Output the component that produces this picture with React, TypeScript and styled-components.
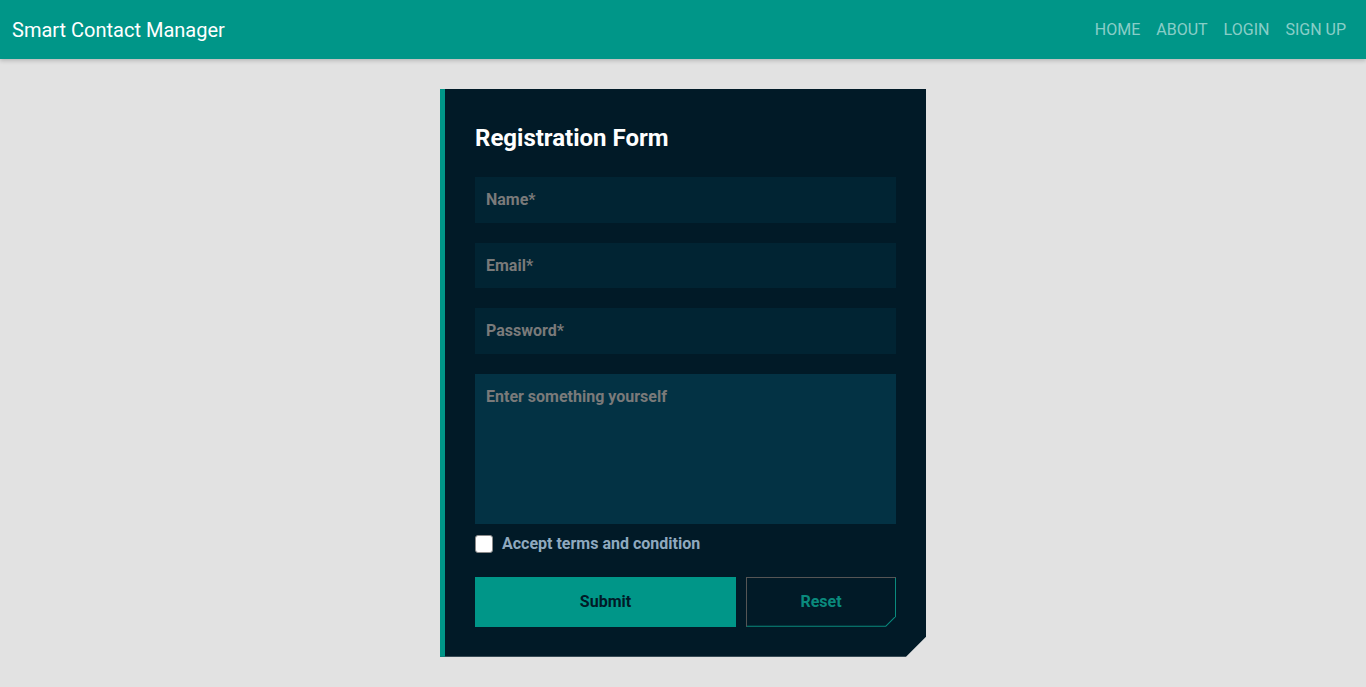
import React from "react";
import styled, { createGlobalStyle } from "styled-components";

const Global = createGlobalStyle`
  * { box-sizing: border-box; }
  html, body { margin: 0; padding: 0; }
  body {
    background: #e2e2e2;
    font-family: Roboto, "Liberation Sans", Arial, sans-serif;
    min-height: 687px;
  }
`;

const Navbar = styled.nav`
  height: 59px;
  background: #009688;
  display: flex;
  align-items: center;
  justify-content: space-between;
  padding: 0 12px;
  box-shadow: 0 2px 4px rgba(0, 0, 0, 0.18);
  position: relative;
  z-index: 1;
`;

const Brand = styled.a`
  color: #fff;
  font-size: 20px;
  line-height: 30px;
  text-decoration: none;
  margin-top: 1px;
`;

const NavList = styled.ul`
  display: flex;
  list-style: none;
  margin: 0;
  padding: 0;
`;

const NavLink = styled.a`
  display: block;
  padding: 8px 8px;
  font-size: 16px;
  line-height: 24px;
  color: rgba(255, 255, 255, 0.55);
  text-decoration: none;
  text-transform: uppercase;
`;

const Main = styled.main`
  display: flex;
  justify-content: center;
  padding-top: 30px;
`;

const Card = styled.form`
  width: 486px;
  background: #011a27;
  border-left: 5px solid #009688;
  padding: 30px 30px 30px 30px;
  clip-path: polygon(0 0, 100% 0, 100% calc(100% - 20px), calc(100% - 20px) 100%, 0 100%);
  display: flex;
  flex-direction: column;
`;

const Title = styled.h2`
  margin: 4px 0 24px;
  color: #fff;
  font-size: 24px;
  font-weight: 700;
  line-height: 30px;
`;

const Fields = styled.div`
  display: flex;
  flex-direction: column;
  gap: 20px;
`;

const Input = styled.input`
  height: 45.6px;
  width: 100%;
  border: none;
  outline: none;
  background: #012433;
  color: #ddd;
  padding: 0 11px;
  font-family: Roboto, "Liberation Sans", Arial, sans-serif;
  font-size: 16px;
  font-weight: 700;
  &::placeholder { color: #7a7a7a; opacity: 1; }
`;

const TextArea = styled.textarea`
  height: 150px;
  width: 100%;
  border: none;
  outline: none;
  resize: none;
  background: #033244;
  color: #ddd;
  padding: 13px 11px;
  font-family: Roboto, "Liberation Sans", Arial, sans-serif;
  font-size: 16px;
  font-weight: 700;
  line-height: 20px;
  display: block;
  &::placeholder { color: #7a7a7a; opacity: 1; }
`;

const CheckRow = styled.label`
  display: flex;
  align-items: center;
  gap: 9px;
  margin-top: 11px;
  color: #8fa9bf;
  font-size: 16px;
  font-weight: 700;
  line-height: 18px;
`;

const Box = styled.span`
  width: 18px;
  height: 18px;
  background: #fff;
  border: 1px solid #8a8a8a;
  border-radius: 3px;
  display: inline-block;
`;

const Buttons = styled.div`
  display: flex;
  gap: 10px;
  margin-top: 24px;
`;

const Submit = styled.button`
  width: 261px;
  height: 50px;
  border: none;
  background: #009688;
  color: #011a27;
  font-family: Roboto, "Liberation Sans", Arial, sans-serif;
  font-size: 16px;
  font-weight: 700;
`;

const ResetFrame = styled.div`
  width: 150px;
  height: 50px;
  background: #0a8a7d;
  border-top: 1px solid #555;
  border-left: 1px solid #555;
  padding: 0 1px 1px 0;
  clip-path: polygon(0 0, 100% 0, 100% calc(100% - 10px), calc(100% - 10px) 100%, 0 100%);
`;

const Reset = styled.button`
  width: 100%;
  height: 100%;
  border: none;
  background: #011a27;
  color: #0a8a7d;
  font-family: Roboto, "Liberation Sans", Arial, sans-serif;
  font-size: 16px;
  font-weight: 700;
  clip-path: polygon(0 0, 100% 0, 100% calc(100% - 9.5px), calc(100% - 9.5px) 100%, 0 100%);
`;

export default function App() {
  return (
    <>
      <Global />
      <Navbar>
        <Brand href="#">Smart Contact Manager</Brand>
        <NavList>
          <li><NavLink href="#">Home</NavLink></li>
          <li><NavLink href="#">About</NavLink></li>
          <li><NavLink href="#">Login</NavLink></li>
          <li><NavLink href="#">Sign up</NavLink></li>
        </NavList>
      </Navbar>
      <Main>
        <Card onSubmit={(e) => e.preventDefault()}>
          <Title>Registration Form</Title>
          <Fields>
            <Input placeholder="Name*" />
            <Input placeholder="Email*" />
            <Input type="password" placeholder="Password*" />
            <TextArea placeholder="Enter something yourself" />
          </Fields>
          <CheckRow>
            <Box />
            Accept terms and condition
          </CheckRow>
          <Buttons>
            <Submit type="submit">Submit</Submit>
            <ResetFrame>
              <Reset type="reset">Reset</Reset>
            </ResetFrame>
          </Buttons>
        </Card>
      </Main>
    </>
  );
}
